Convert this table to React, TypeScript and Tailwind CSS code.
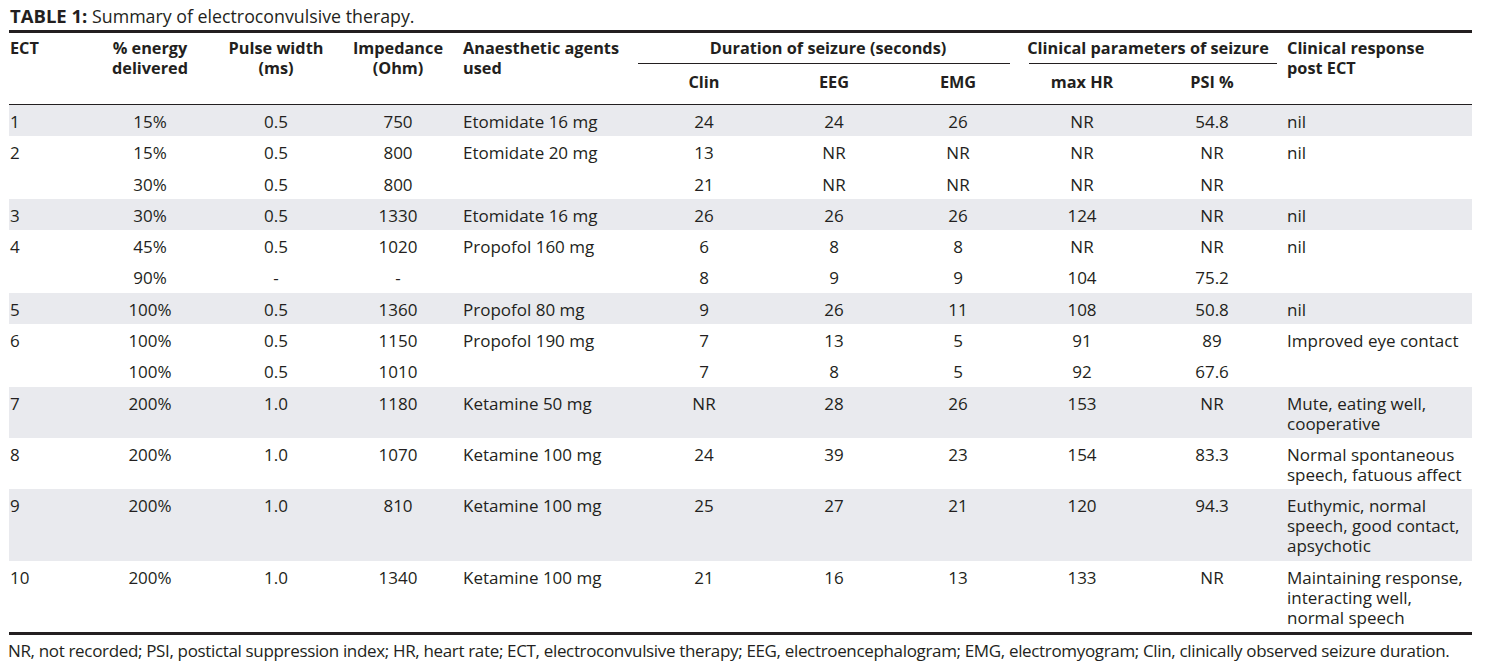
const rows = [
  { ect: "1", energy: "15%", pulse: "0.5", imp: "750", agent: "Etomidate 16 mg", clin: "24", eeg: "24", emg: "26", hr: "NR", psi: "54.8", resp: ["nil"], shade: true },
  { ect: "2", energy: "15%", pulse: "0.5", imp: "800", agent: "Etomidate 20 mg", clin: "13", eeg: "NR", emg: "NR", hr: "NR", psi: "NR", resp: ["nil"], shade: false },
  { ect: "", energy: "30%", pulse: "0.5", imp: "800", agent: "", clin: "21", eeg: "NR", emg: "NR", hr: "NR", psi: "NR", resp: [], shade: false },
  { ect: "3", energy: "30%", pulse: "0.5", imp: "1330", agent: "Etomidate 16 mg", clin: "26", eeg: "26", emg: "26", hr: "124", psi: "NR", resp: ["nil"], shade: true },
  { ect: "4", energy: "45%", pulse: "0.5", imp: "1020", agent: "Propofol 160 mg", clin: "6", eeg: "8", emg: "8", hr: "NR", psi: "NR", resp: ["nil"], shade: false },
  { ect: "", energy: "90%", pulse: "-", imp: "-", agent: "", clin: "8", eeg: "9", emg: "9", hr: "104", psi: "75.2", resp: [], shade: false },
  { ect: "5", energy: "100%", pulse: "0.5", imp: "1360", agent: "Propofol 80 mg", clin: "9", eeg: "26", emg: "11", hr: "108", psi: "50.8", resp: ["nil"], shade: true },
  { ect: "6", energy: "100%", pulse: "0.5", imp: "1150", agent: "Propofol 190 mg", clin: "7", eeg: "13", emg: "5", hr: "91", psi: "89", resp: ["Improved eye contact"], shade: false },
  { ect: "", energy: "100%", pulse: "0.5", imp: "1010", agent: "", clin: "7", eeg: "8", emg: "5", hr: "92", psi: "67.6", resp: [], shade: false },
  { ect: "7", energy: "200%", pulse: "1.0", imp: "1180", agent: "Ketamine 50 mg", clin: "NR", eeg: "28", emg: "26", hr: "153", psi: "NR", resp: ["Mute, eating well,", "cooperative"], shade: true },
  { ect: "8", energy: "200%", pulse: "1.0", imp: "1070", agent: "Ketamine 100 mg", clin: "24", eeg: "39", emg: "23", hr: "154", psi: "83.3", resp: ["Normal spontaneous", "speech, fatuous affect"], shade: false },
  { ect: "9", energy: "200%", pulse: "1.0", imp: "810", agent: "Ketamine 100 mg", clin: "25", eeg: "27", emg: "21", hr: "120", psi: "94.3", resp: ["Euthymic, normal", "speech, good contact,", "apsychotic"], shade: true },
  { ect: "10", energy: "200%", pulse: "1.0", imp: "1340", agent: "Ketamine 100 mg", clin: "21", eeg: "16", emg: "13", hr: "133", psi: "NR", resp: ["Maintaining response,", "interacting well,", "normal speech"], shade: false },
];

const App = () => {
  return (
    <div className="bg-white text-[#231f20] font-['Open_Sans',sans-serif] w-[1487px] h-[671px] overflow-hidden">
      <div className="pl-[10px] pt-[6px] h-[30px] text-[17.8px] leading-5 whitespace-nowrap">
        <span className="font-bold text-[18.5px]">TABLE 1:</span> Summary of electroconvulsive therapy.
      </div>

      <table className="ml-[9px] w-[1463px] table-fixed border-collapse text-[17px] leading-5">
        <colgroup>
          <col className="w-[86px]" />
          <col className="w-[110px]" />
          <col className="w-[142px]" />
          <col className="w-[102px]" />
          <col className="w-[189px]" />
          <col className="w-[132px]" />
          <col className="w-[128px]" />
          <col className="w-[120px]" />
          <col className="w-[128px]" />
          <col className="w-[132px]" />
          <col className="w-[194px]" />
        </colgroup>
        <thead className="font-bold text-[16.3px]">
          <tr className="border-t-[3px] border-[#231f20]">
            <th rowSpan={2} className="text-left align-top pt-[5px] pl-px font-bold">ECT</th>
            <th rowSpan={2} className="text-center align-top pt-[5px] font-bold">% energy<br />delivered</th>
            <th rowSpan={2} className="text-center align-top pt-[5px] font-bold">Pulse width<br />(ms)</th>
            <th rowSpan={2} className="text-center align-top pt-[5px] font-bold">Impedance<br />(Ohm)</th>
            <th rowSpan={2} className="text-left align-top pt-[5px] pl-[14px] font-bold whitespace-nowrap">Anaesthetic agents<br />used</th>
            <th colSpan={3} className="p-0 align-top font-bold">
              <div className="pt-[5px] pb-[5px] text-center">Duration of seizure (seconds)</div>
              <div className="h-px bg-[#231f20] mr-[8px]" />
            </th>
            <th colSpan={2} className="p-0 align-top font-bold">
              <div className="pt-[5px] pb-[5px] text-center whitespace-nowrap">Clinical parameters of seizure</div>
              <div className="h-px bg-[#231f20] ml-[11px] mr-px" />
            </th>
            <th rowSpan={2} className="text-left align-top pt-[5px] pl-[9px] font-bold">Clinical response<br />post ECT</th>
          </tr>
          <tr className="border-b border-[#231f20]">
            <th className="text-center pt-[8px] pb-[12px] font-bold">Clin</th>
            <th className="text-center pt-[8px] pb-[12px] font-bold">EEG</th>
            <th className="text-center pt-[8px] pb-[12px] font-bold">EMG</th>
            <th className="text-center pt-[8px] pb-[12px] font-bold">max HR</th>
            <th className="text-center pt-[8px] pb-[12px] font-bold">PSI %</th>
          </tr>
        </thead>
        <tbody>
          {rows.map((r, i) => (
            <tr key={i} className={r.shade ? "bg-[#e9eaee]" : "bg-white"}>
              <td className="align-top pt-[7px] pb-[4.3px] pl-px">{r.ect}</td>
              <td className="align-top pt-[7px] pb-[4.3px] text-center">{r.energy}</td>
              <td className="align-top pt-[7px] pb-[4.3px] text-center">{r.pulse}</td>
              <td className="align-top pt-[7px] pb-[4.3px] text-center">{r.imp}</td>
              <td className="align-top pt-[7px] pb-[4.3px] pl-[14px] whitespace-nowrap">{r.agent}</td>
              <td className="align-top pt-[7px] pb-[4.3px] text-center">{r.clin}</td>
              <td className="align-top pt-[7px] pb-[4.3px] text-center">{r.eeg}</td>
              <td className="align-top pt-[7px] pb-[4.3px] text-center">{r.emg}</td>
              <td className="align-top pt-[7px] pb-[4.3px] text-center">{r.hr}</td>
              <td className="align-top pt-[7px] pb-[4.3px] text-center">{r.psi}</td>
              <td className="align-top pt-[7px] pb-[4.3px] pl-[9px] whitespace-nowrap">
                {r.resp.map((line, j) => (
                  <div key={j}>{line}</div>
                ))}
              </td>
            </tr>
          ))}
        </tbody>
      </table>

      <div className="ml-[9px] w-[1463px] h-[3px] bg-[#231f20]" />
      <div className="pl-[8px] pt-[6px] text-[17px] leading-5 tracking-[-0.34px] whitespace-nowrap">
        NR, not recorded; PSI, postictal suppression index; HR, heart rate; ECT, electroconvulsive therapy; EEG, electroencephalogram; EMG, electromyogram; Clin, clinically observed seizure duration.
      </div>
    </div>
  );
};

export default App;
